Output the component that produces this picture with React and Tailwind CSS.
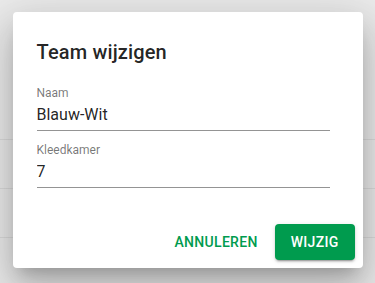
import { useState } from 'react';

const rows = ['Rood-Zwart', 'Blauw-Wit', 'Geel-Groen', 'Oranje'];

export default function App() {
  const [naam, setNaam] = useState('Blauw-Wit');
  const [kamer, setKamer] = useState('7');

  return (
    <div className="relative h-[283px] w-[375px] overflow-hidden bg-white font-['Roboto','Liberation_Sans',sans-serif]">
      {/* Page behind the dialog */}
      <div className="pt-[91px]">
        {rows.map((row) => (
          <div key={row} className="h-[49px] border-b border-[#eeeeee]" />
        ))}
      </div>

      {/* Backdrop + dialog */}
      <div className="absolute inset-0 bg-black/[0.08]">
        <div className="mx-auto mt-[12px] flex h-[256px] w-[350px] flex-col rounded-[4px] bg-white shadow-[0px_11px_15px_-7px_rgba(0,0,0,0.2),0px_24px_38px_3px_rgba(0,0,0,0.14),0px_9px_46px_8px_rgba(0,0,0,0.12)]">
          <h2 className="px-6 pt-6 text-[20px] font-medium leading-[32px] tracking-[0.15px] text-black/[0.87]">
            Team wijzigen
          </h2>

          <div className="mt-[19px] flex flex-col gap-[13px] pl-6 pr-[33px]">
            <label className="flex flex-col">
              <span className="text-[12px] leading-[12px] text-black/[0.54]">Naam</span>
              <input
                value={naam}
                onChange={(e) => setNaam(e.target.value)}
                className="mt-[4px] border-b border-black/[0.42] pb-[3px] text-[16px] leading-[24px] text-black/[0.87] outline-none"
              />
            </label>
            <label className="flex flex-col">
              <span className="text-[12px] leading-[12px] text-black/[0.54]">Kleedkamer</span>
              <input
                value={kamer}
                onChange={(e) => setKamer(e.target.value)}
                className="mt-[4px] border-b border-black/[0.42] pb-[3px] text-[16px] leading-[24px] text-black/[0.87] outline-none"
              />
            </label>
          </div>

          <div className="mt-auto flex items-center justify-end gap-[9px] p-2">
            <button className="min-w-[64px] rounded-[4px] px-2 py-[6px] text-[14px] font-medium uppercase leading-[24px] tracking-[0.3px] text-[#009b4e]">
              Annuleren
            </button>
            <button className="min-w-[64px] rounded-[4px] bg-[#009b4e] px-4 py-[6px] text-[14px] font-medium uppercase leading-[24px] tracking-[0.3px] text-white shadow-[0px_3px_1px_-2px_rgba(0,0,0,0.2),0px_2px_2px_0px_rgba(0,0,0,0.14),0px_1px_5px_0px_rgba(0,0,0,0.12)]">
              Wijzig
            </button>
          </div>
        </div>
      </div>
    </div>
  );
}
